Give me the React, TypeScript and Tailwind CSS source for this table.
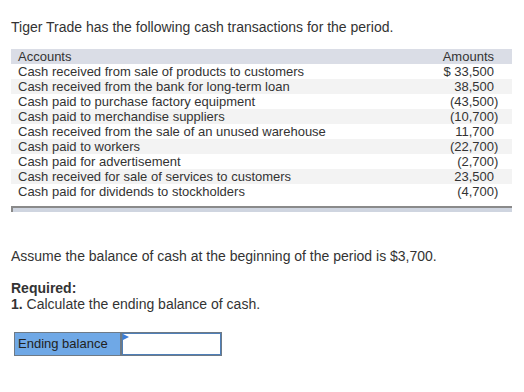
import React from "react";

const rows: [string, string][] = [
  ["Cash received from sale of products to customers", "$ 33,500"],
  ["Cash received from the bank for long-term loan", "38,500"],
  ["Cash paid to purchase factory equipment", "(43,500)"],
  ["Cash paid to merchandise suppliers", "(10,700)"],
  ["Cash received from the sale of an unused warehouse", "11,700"],
  ["Cash paid to workers", "(22,700)"],
  ["Cash paid for advertisement", "(2,700)"],
  ["Cash received for sale of services to customers", "23,500"],
  ["Cash paid for dividends to stockholders", "(4,700)"],
];

// Accounting-style amount: the closing parenthesis hangs past the digit column.
function Amount({ v }: { v: string }) {
  const neg = v.startsWith("(");
  return (
    <span className="inline-block whitespace-pre">
      {v.replace(")", "")}
      <span className="inline-block w-[5px]">{neg ? ")" : ""}</span>
    </span>
  );
}

export default function App() {
  return (
    <div className="w-[524px] h-[392px] bg-white text-[#333] font-['Liberation_Sans',Arial,sans-serif]">
      <div className="pt-[19px] pl-[11px] text-[14px] leading-[17px]">
        Tiger Trade has the following cash transactions for the period.
      </div>
      <div className="mt-[13px] ml-[11px] w-[501px] text-[13px] leading-[15px]">
        <div className="flex justify-between bg-[#dadde6] pl-[7px] pr-[18px]">
          <span>Accounts</span>
          <span>Amounts</span>
        </div>
        {rows.map(([a, v], i) => (
          <div
            key={a}
            className={`flex justify-between pl-[7px] pr-[13px] ${i % 2 === 1 ? "bg-[#f3f3f3]" : "bg-white"}`}
          >
            <span>{a}</span>
            <Amount v={v} />
          </div>
        ))}
        <div className="mt-[7px] h-[6px] bg-[#cfd5e0] border-t-2 border-l-2 border-[#8a8a8a]" />
      </div>
      <div className="mt-[36px] pl-[11px] text-[14px] leading-[17px]">
        Assume the balance of cash at the beginning of the period is $3,700.
      </div>
      <div className="mt-[15px] pl-[11px] text-[14px] leading-[16px]">
        <div className="font-bold">Required:</div>
        <div>
          <span className="font-bold">1.</span> Calculate the ending balance of cash.
        </div>
      </div>
      <div className="mt-[20px] ml-[14px] flex h-[24px] w-[208px] border border-[#6e7a86]">
        <div className="w-[107px] bg-[#6fa8e6] border-r-2 border-[#6e7a86] pl-[3px] text-[13px] leading-[22px] text-[#222]">
          Ending balance
        </div>
        <div className="relative flex-1 bg-white border border-[#4f7fb8]">
          <svg className="absolute left-0 top-0" width="6" height="6" viewBox="0 0 6 6">
            <polygon points="0,0 6,3 0,6" fill="#3b7dd8" />
          </svg>
        </div>
      </div>
    </div>
  );
}
